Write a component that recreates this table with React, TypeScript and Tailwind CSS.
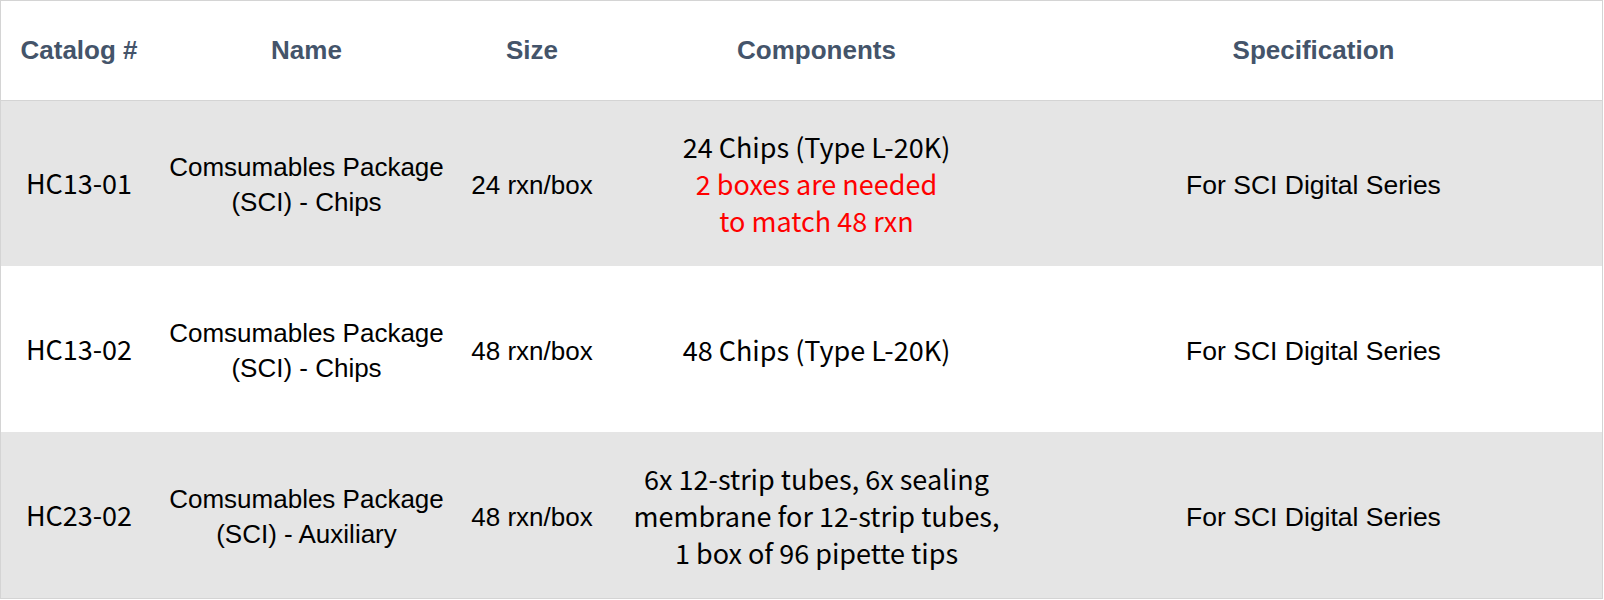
import React from 'react';

type Row = {
  catalog: string;
  name: [string, string];
  size: string;
  components: React.ReactNode;
  spec: string;
  shaded: boolean;
};

const rows: Row[] = [
  {
    catalog: 'HC13-01',
    name: ['Comsumables Package', '(SCI) - Chips'],
    size: '24 rxn/box',
    components: (
      <>
        <div>24 Chips (Type L-20K)</div>
        <div className="text-[#ff0000]">2 boxes are needed</div>
        <div className="text-[#ff0000]">to match 48 rxn</div>
      </>
    ),
    spec: 'For SCI Digital Series',
    shaded: true,
  },
  {
    catalog: 'HC13-02',
    name: ['Comsumables Package', '(SCI) - Chips'],
    size: '48 rxn/box',
    components: <div>48 Chips (Type L-20K)</div>,
    spec: 'For SCI Digital Series',
    shaded: false,
  },
  {
    catalog: 'HC23-02',
    name: ['Comsumables Package', '(SCI) - Auxiliary'],
    size: '48 rxn/box',
    components: (
      <>
        <div>6x 12-strip tubes, 6x sealing</div>
        <div>membrane for 12-strip tubes,</div>
        <div>1 box of 96 pipette tips</div>
      </>
    ),
    spec: 'For SCI Digital Series',
    shaded: true,
  },
];

const cols = 'grid grid-cols-[156px_299px_152px_417px_577px]';
const arial = "font-['Liberation_Sans',Arial,sans-serif]";
const yahei = "font-['Noto_Sans_CJK_SC','Noto_Sans',sans-serif]";

export default function App() {
  return (
    <div className="w-[1603px] h-[599px] bg-white border border-[#d4d4d4] text-black">
      <div className={`${cols} h-[100px] border-b border-[#d4d4d4] ${arial} font-bold text-[26px] text-[#44546a]`}>
        <div className="flex items-center justify-center">Catalog #</div>
        <div className="flex items-center justify-center">Name</div>
        <div className="flex items-center justify-center">Size</div>
        <div className="flex items-center justify-center">Components</div>
        <div className="flex items-center justify-center">Specification</div>
      </div>
      {rows.map((r, i) => (
        <div
          key={r.catalog}
          className={`${cols} ${i === 0 ? 'h-[165px]' : 'h-[166px]'} ${r.shaded ? 'bg-[#e5e5e5]' : 'bg-white'}`}
        >
          <div className={`flex items-center justify-center ${yahei} text-[27px]`}>{r.catalog}</div>
          <div className={`flex flex-col items-center justify-center pt-[3px] text-center ${arial} text-[26px] leading-[35px]`}>
            <div>{r.name[0]}</div>
            <div>{r.name[1]}</div>
          </div>
          <div className={`flex items-center justify-center pt-[4px] ${arial} text-[26px]`}>{r.size}</div>
          <div className={`flex flex-col items-center justify-center text-center ${yahei} text-[27px] leading-[37px]`}>
            {r.components}
          </div>
          <div className={`flex items-center justify-center pt-[5px] ${arial} text-[26.5px]`}>{r.spec}</div>
        </div>
      ))}
    </div>
  );
}
